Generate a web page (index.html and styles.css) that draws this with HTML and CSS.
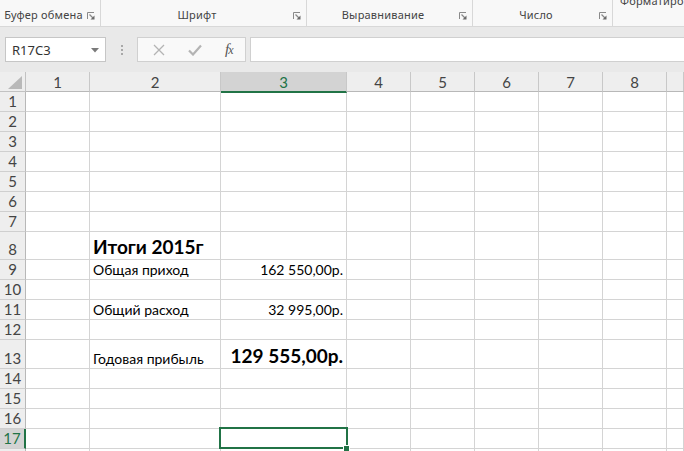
FILE: index.html
```html
<!DOCTYPE html>
<html lang="ru">
<head>
<meta charset="utf-8">
<link rel="stylesheet" href="styles.css">
</head>
<body>
<div class="app">
  <div class="ribbon">
    <div class="group g1"><span class="glabel">Буфер обмена</span><svg class="launch" width="8" height="8" viewBox="0 0 8 8"><path d="M0.5 7V0.5H7" fill="none" stroke="#8a8a8a"/><path d="M2.5 2.5L6 6" stroke="#8a8a8a" stroke-width="1.2"/><path d="M7.5 7.5H3.5L7.5 3.5Z" fill="#6a6a6a"/></svg></div>
    <div class="group g2"><span class="glabel">Шрифт</span><svg class="launch" width="8" height="8" viewBox="0 0 8 8"><path d="M0.5 7V0.5H7" fill="none" stroke="#8a8a8a"/><path d="M2.5 2.5L6 6" stroke="#8a8a8a" stroke-width="1.2"/><path d="M7.5 7.5H3.5L7.5 3.5Z" fill="#6a6a6a"/></svg></div>
    <div class="group g3"><span class="glabel">Выравнивание</span><svg class="launch" width="8" height="8" viewBox="0 0 8 8"><path d="M0.5 7V0.5H7" fill="none" stroke="#8a8a8a"/><path d="M2.5 2.5L6 6" stroke="#8a8a8a" stroke-width="1.2"/><path d="M7.5 7.5H3.5L7.5 3.5Z" fill="#6a6a6a"/></svg></div>
    <div class="group g4"><span class="glabel">Число</span><svg class="launch" width="8" height="8" viewBox="0 0 8 8"><path d="M0.5 7V0.5H7" fill="none" stroke="#8a8a8a"/><path d="M2.5 2.5L6 6" stroke="#8a8a8a" stroke-width="1.2"/><path d="M7.5 7.5H3.5L7.5 3.5Z" fill="#6a6a6a"/></svg></div>
    <div class="group g5"><span class="cut">Форматиро</span></div>
  </div>

  <div class="fbar">
    <div class="namebox"><span>R17C3</span><svg width="8" height="5" viewBox="0 0 8 5"><path d="M0 0H8L4 4.5Z" fill="#7a7a7a"/></svg></div>
    <div class="grip"><i></i><i></i><i></i></div>
    <div class="fbtns">
      <svg class="fb-x" width="12" height="12" viewBox="0 0 12 12"><path d="M1 1L11 11M11 1L1 11" stroke="#b4b4b4" stroke-width="1.3"/></svg>
      <svg class="fb-ok" width="14" height="12" viewBox="0 0 14 12"><path d="M1 6.5L5 10.5L13 1.5" fill="none" stroke="#b4b4b4" stroke-width="2.2"/></svg>
      <span class="fx">f<small>x</small></span>
    </div>
    <div class="finput"></div>
  </div>

  <div class="sheet">
    <div class="corner"><svg width="14" height="13" viewBox="0 0 14 13"><path d="M14 0V13H0Z" fill="#b9b9b9"/></svg></div>
    <div class="ch">1</div><div class="ch">2</div><div class="ch sel">3</div><div class="ch">4</div><div class="ch">5</div><div class="ch">6</div><div class="ch">7</div><div class="ch">8</div><div class="ch"></div>

    <div class="rh">1</div><div class="c"></div><div class="c"></div><div class="c"></div><div class="c"></div><div class="c"></div><div class="c"></div><div class="c"></div><div class="c"></div><div class="c"></div>
    <div class="rh">2</div><div class="c"></div><div class="c"></div><div class="c"></div><div class="c"></div><div class="c"></div><div class="c"></div><div class="c"></div><div class="c"></div><div class="c"></div>
    <div class="rh">3</div><div class="c"></div><div class="c"></div><div class="c"></div><div class="c"></div><div class="c"></div><div class="c"></div><div class="c"></div><div class="c"></div><div class="c"></div>
    <div class="rh">4</div><div class="c"></div><div class="c"></div><div class="c"></div><div class="c"></div><div class="c"></div><div class="c"></div><div class="c"></div><div class="c"></div><div class="c"></div>
    <div class="rh">5</div><div class="c"></div><div class="c"></div><div class="c"></div><div class="c"></div><div class="c"></div><div class="c"></div><div class="c"></div><div class="c"></div><div class="c"></div>
    <div class="rh">6</div><div class="c"></div><div class="c"></div><div class="c"></div><div class="c"></div><div class="c"></div><div class="c"></div><div class="c"></div><div class="c"></div><div class="c"></div>
    <div class="rh">7</div><div class="c"></div><div class="c"></div><div class="c"></div><div class="c"></div><div class="c"></div><div class="c"></div><div class="c"></div><div class="c"></div><div class="c"></div>
    <div class="rh">8</div><div class="c"></div><div class="c big">Итоги 2015г</div><div class="c"></div><div class="c"></div><div class="c"></div><div class="c"></div><div class="c"></div><div class="c"></div><div class="c"></div>
    <div class="rh">9</div><div class="c"></div><div class="c">Общая приход</div><div class="c num">162 550,00р.</div><div class="c"></div><div class="c"></div><div class="c"></div><div class="c"></div><div class="c"></div><div class="c"></div>
    <div class="rh">10</div><div class="c"></div><div class="c"></div><div class="c"></div><div class="c"></div><div class="c"></div><div class="c"></div><div class="c"></div><div class="c"></div><div class="c"></div>
    <div class="rh">11</div><div class="c"></div><div class="c">Общий расход</div><div class="c num">32 995,00р.</div><div class="c"></div><div class="c"></div><div class="c"></div><div class="c"></div><div class="c"></div><div class="c"></div>
    <div class="rh">12</div><div class="c"></div><div class="c"></div><div class="c"></div><div class="c"></div><div class="c"></div><div class="c"></div><div class="c"></div><div class="c"></div><div class="c"></div>
    <div class="rh">13</div><div class="c"></div><div class="c">Годовая прибыль</div><div class="c num big">129 555,00р.</div><div class="c"></div><div class="c"></div><div class="c"></div><div class="c"></div><div class="c"></div><div class="c"></div>
    <div class="rh">14</div><div class="c"></div><div class="c"></div><div class="c"></div><div class="c"></div><div class="c"></div><div class="c"></div><div class="c"></div><div class="c"></div><div class="c"></div>
    <div class="rh">15</div><div class="c"></div><div class="c"></div><div class="c"></div><div class="c"></div><div class="c"></div><div class="c"></div><div class="c"></div><div class="c"></div><div class="c"></div>
    <div class="rh">16</div><div class="c"></div><div class="c"></div><div class="c"></div><div class="c"></div><div class="c"></div><div class="c"></div><div class="c"></div><div class="c"></div><div class="c"></div>
    <div class="rh sel">17</div><div class="c"></div><div class="c"></div><div class="c active"><span class="handle"></span></div><div class="c"></div><div class="c"></div><div class="c"></div><div class="c"></div><div class="c"></div><div class="c"></div>
    <div class="rh"></div><div class="c"></div><div class="c"></div><div class="c"></div><div class="c"></div><div class="c"></div><div class="c"></div><div class="c"></div><div class="c"></div><div class="c"></div>
  </div>
</div>
</body>
</html>
```

FILE: styles.css
```css
html, body {
  margin: 0;
  padding: 0;
  background: #ffffff;
}
.app {
  width: 684px;
  height: 451px;
  overflow: hidden;
  font-family: "Noto Sans", "Open Sans", sans-serif;
}

/* ribbon */
.ribbon {
  display: flex;
  height: 26px;
  background: #f8f8f8;
  border-bottom: 1px solid #d8d8d8;
  overflow: hidden;
}
.group {
  flex: none;
  display: flex;
  align-items: flex-end;
  padding-bottom: 4px;
  box-sizing: border-box;
  height: 26px;
  border-right: 1px solid #d8d8d8;
}
.g1 { width: 101px; }
.g2 { width: 206px; }
.g3 { width: 166px; }
.g4 { width: 140px; }
.g5 {
  flex: 1 1 0;
  min-width: 0;
  overflow: hidden;
  border-right: none;
  align-items: flex-start;
  padding: 0 0 0 7px;
}
.glabel {
  flex: 1;
  text-align: center;
  font-size: 11px;
  line-height: 14px;
  letter-spacing: 0.2px;
  color: #444444;
  white-space: nowrap;
}
.launch {
  margin: 0 5px 2px 0;
  flex: none;
}
.cut {
  font-size: 11px;
  line-height: 14px;
  letter-spacing: 0.2px;
  color: #444444;
  margin-top: -6px;
  white-space: nowrap;
}

/* formula bar */
.fbar {
  display: flex;
  height: 45px;
  box-sizing: border-box;
  padding: 10px 0 10px 5px;
  background: #e9e9e9;
}
.namebox {
  width: 101px;
  height: 25px;
  box-sizing: border-box;
  border: 1px solid #c6c6c6;
  background: #ffffff;
  display: flex;
  align-items: center;
  justify-content: space-between;
  padding: 0 6px 0 6px;
  font-size: 13px;
  color: #333333;
}
.namebox svg { margin-top: 1px; }
.grip {
  width: 31px;
  display: flex;
  flex-direction: column;
  align-items: center;
  justify-content: center;
  gap: 2px;
}
.grip i {
  display: block;
  width: 2px;
  height: 2px;
  background: #a8a8a8;
}
.fbtns {
  width: 109px;
  height: 25px;
  box-sizing: border-box;
  border: 1px solid #d0d0d0;
  background: #f9f9f9;
  display: flex;
  align-items: center;
  padding-left: 15px;
}
.fb-x { margin-right: 23px; }
.fb-ok { margin-right: 23px; }
.fx {
  font-family: "Liberation Serif", "DejaVu Serif", serif;
  font-style: italic;
  font-size: 15px;
  color: #555555;
  letter-spacing: -1px;
}
.fx small { font-size: 12px; }
.finput {
  flex: 1;
  height: 25px;
  box-sizing: border-box;
  margin-left: 4px;
  border: 1px solid #d0d0d0;
  border-right: none;
  background: #ffffff;
}

/* sheet */
.sheet {
  display: grid;
  grid-template-columns: 26px 64px 131px 126px 64px 64px 64px 64px 64px 1fr;
  grid-template-rows: 20px repeat(7, 20px) 28px repeat(4, 20px) 29px repeat(5, 20px);
  font-family: "Lato", "Open Sans", sans-serif;
}
.corner {
  background: #eeeeee;
  border-right: 1px solid #c2c2c2;
  border-bottom: 1px solid #c2c2c2;
  display: flex;
  align-items: flex-end;
  justify-content: flex-end;
  padding: 0 3px 2px 0;
}
.ch {
  background: #eeeeee;
  border-right: 1px solid #c8c8c8;
  border-bottom: 1px solid #b8b8b8;
  display: flex;
  align-items: center;
  justify-content: center;
  font-size: 15px;
  color: #444444;
}
.ch.sel {
  background: #d3d3d3;
  color: #217346;
  border-bottom: 2px solid #217346;
  margin-bottom: -1px;
  position: relative;
  z-index: 2;
}
.rh {
  background: #eeeeee;
  border-right: 1px solid #b8b8b8;
  border-bottom: 1px solid #cfcfcf;
  display: flex;
  align-items: flex-end;
  justify-content: center;
  padding-bottom: 1px;
  font-size: 15px;
  line-height: 17px;
  color: #444444;
}
.rh.sel {
  background: #d3d3d3;
  color: #217346;
  border-right: 2px solid #217346;
}
.c {
  border-right: 1px solid #d4d4d4;
  border-bottom: 1px solid #d4d4d4;
  display: flex;
  align-items: flex-end;
  padding: 0 3px 1px 3px;
  font-size: 14px;
  line-height: 17px;
  color: #000000;
  white-space: nowrap;
  overflow: visible;
}
.num { justify-content: flex-end; }
.big {
  font-weight: bold;
  font-size: 19px;
  line-height: 22px;
  padding-bottom: 1px;
}
.active {
  position: relative;
}
.active::after {
  content: "";
  position: absolute;
  left: -2px;
  top: -2px;
  right: -2px;
  bottom: -1px;
  border: 2px solid #217346;
}
.handle {
  position: absolute;
  right: -4px;
  bottom: -4px;
  width: 5px;
  height: 5px;
  background: #217346;
  border: 1px solid #ffffff;
  z-index: 3;
}
```
